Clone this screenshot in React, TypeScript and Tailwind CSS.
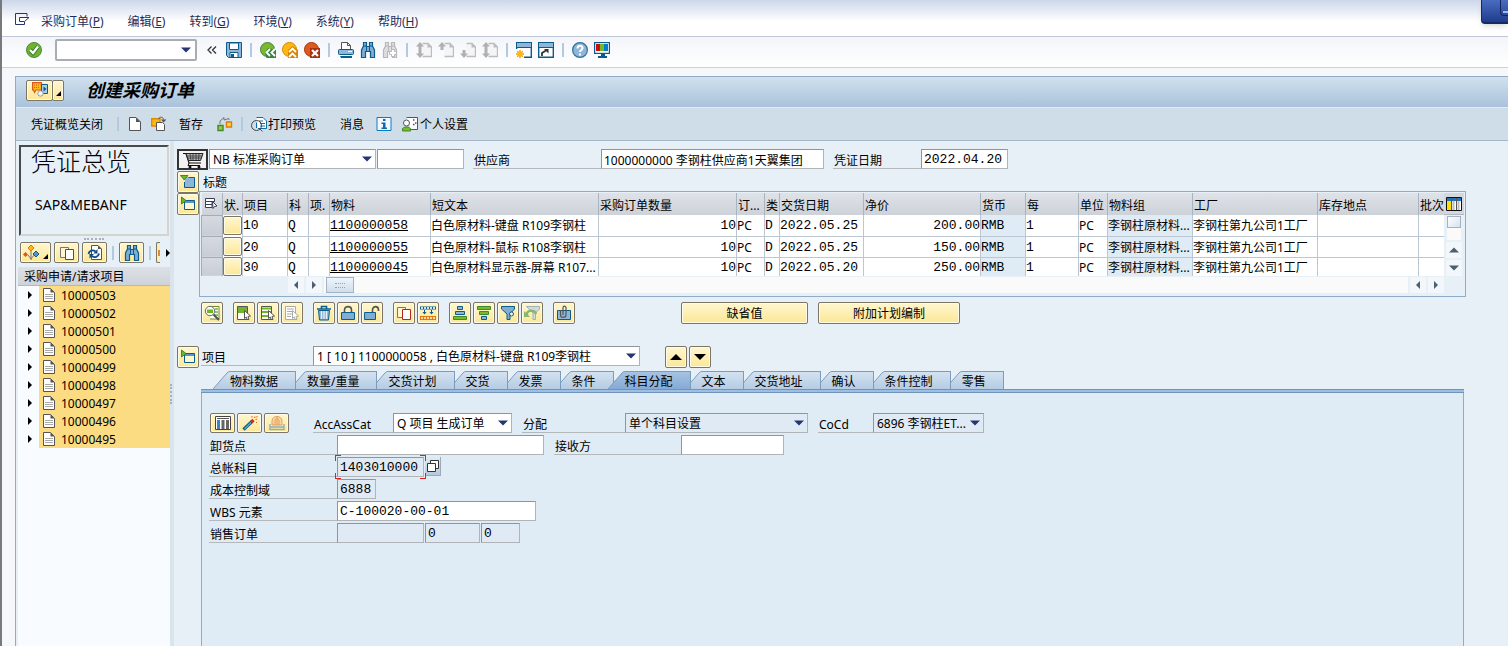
import { useState } from "react";
import type { ReactNode } from "react";

type IconProps = { children: ReactNode; size?: number };

const Icon = ({ children, size = 16 }: IconProps) => (
  <svg
    width={size}
    height={size}
    viewBox="0 0 16 16"
    fill="none"
    className="shrink-0"
    aria-hidden="true"
  >
    {children}
  </svg>
);

const MenuExitIcon = () => (
  <Icon>
    <path d="M13 4.5V1.5H1.5V12.5H10.5V10" stroke="#26366b" />
    <path d="M5.5 5.5H15L10.5 9.5H5.5Z" fill="#fff" stroke="#26366b" />
  </Icon>
);

const CheckIcon = () => (
  <Icon>
    <circle cx="8" cy="8" r="7.5" fill="#6fb52c" stroke="#4c8a3f" />
    <path d="M4 8L7 11L12 4.5" stroke="#2f6b2b" strokeWidth="4" />
    <path d="M4 8L7 11L12 4.5" stroke="#fff" strokeWidth="2.4" />
  </Icon>
);

const SaveIcon = () => (
  <Icon>
    <path d="M.5.5H15.5V15.5H2.5L.5 13.5Z" fill="#8fb5d8" stroke="#0b5c8c" />
    <path d="M3.5 1H12.5V7.5H3.5Z" fill="#fff" stroke="#0b5c8c" />
    <path d="M4 10.5H12V15.5H4Z" fill="#fff" stroke="#0b5c8c" />
    <path d="M5 12H8V15H5Z" fill="#0b5c8c" />
  </Icon>
);

const BackIcon = () => (
  <Icon>
    <circle cx="7.5" cy="7.5" r="7" fill="#7ab82e" stroke="#3f8048" />
    <path d="M16 8V16H6.5L5 11L8 6Z" fill="#3f8048" />
    <path d="M10 7L6.5 10.5L10 14M15 7L11.5 10.5L15 14" stroke="#fff" strokeWidth="1.8" />
  </Icon>
);

const UpIcon = () => (
  <Icon>
    <circle cx="7.5" cy="7.5" r="7" fill="#fdb913" stroke="#d98500" />
    <path d="M6 16V8L10.5 4L16 8V16Z" fill="#d98500" />
    <path d="M7 10L10.5 6.5L14 10M7 15L10.5 11.5L14 15" stroke="#fff" strokeWidth="1.8" />
  </Icon>
);

const CancelIcon = () => (
  <Icon>
    <circle cx="7.5" cy="7.5" r="7" fill="#dc5b1a" stroke="#a83212" />
    <path d="M6 6H16V16H6Z" fill="#a83212" />
    <path d="M8 8L14 14M14 8L8 14" stroke="#fff" strokeWidth="2.2" />
  </Icon>
);

const PrintIcon = () => (
  <Icon>
    <path d="M3.5 7V.5H9.5L12.5 3.5V7" fill="#fff" stroke="#555" />
    <path d="M9.5.5V3.5H12.5" stroke="#555" />
    <rect x=".5" y="7.5" width="15" height="5" rx="1" fill="#8fb5d8" stroke="#0b5c8c" />
    <path d="M10 9.5H14" stroke="#fff" />
    <path d="M2 14H14V16H3Z" fill="#0b5c8c" />
  </Icon>
);

const BinocularsIcon = ({ muted = false }: { muted?: boolean }) => {
  const line = muted ? "#b8b8b8" : "#0b5c8c";
  const fill = muted ? "#dedede" : "#7fadd4";
  return (
    <Icon>
      <path
        d="M3.5.5H6.5V4.5H9.5V.5H12.5V4L14.5 8V15.5H10.5V9.500H5.5V15.5H1.500V8L3.5 4Z"
        fill={fill}
        stroke={line}
        strokeWidth="1.2"
      />
      <path d="M6.5 4.5V9M9.5 4.5V9M3.5 4H6M10 4H12.5" stroke={line} />
      {muted && (
        <path d="M9.5 7.5H12.5V9.500H14.5V12.5H12.5V14.5H9.500V12.5H7.5V9.5H9.5Z" fill="#fff" stroke="#b8b8b8" />
      )}
    </Icon>
  );
};

// first / previous / next / last page
const PageIcon = ({ up, down }: { up?: boolean; down?: boolean }) => (
  <Icon>
    <path d="M6.500 1.5H12L15.5 5V14.5H6.5" fill="#f5f5f5" stroke="#bdbdbd" strokeWidth="1.4" />
    <path d="M11.5 1V5.5H16Z" fill="#bdbdbd" />
    {up && <path d="M4 0L8 4.5H5.5V8H2.5V4.5H0Z" fill="#b0b0b0" />}
    {down && <path d="M4 16L0 11.5H2.5V8H5.5V11.5H8Z" fill="#b0b0b0" />}
  </Icon>
);

const NewSessionIcon = () => (
  <Icon>
    <path d="M.7.7H15.3V15.3H.7Z" fill="#fff" stroke="#0b5c8c" strokeWidth="1.4" />
    <path d="M1 1H15V5H1Z" fill="#8fb5d8" />
    <path d="M0 5.5H16" stroke="#0b5c8c" />
    <path d="M0 7H8V16H0Z" fill="#fff" />
    <path d="M4 8V16M0 12H8M1.2 9.2L6.8 14.8M6.8 9.2L1.2 14.8" stroke="#f5a000" strokeWidth="1.5" />
    <circle cx="4" cy="12" r="2.2" fill="#fdb913" />
  </Icon>
);

const ShortcutIcon = () => (
  <Icon>
    <path d="M.7.7H15.3V15.3H.7Z" fill="#fff" stroke="#0b5c8c" strokeWidth="1.4" />
    <path d="M1 1H15V5H1Z" fill="#8fb5d8" />
    <path d="M0 5.5H16" stroke="#0b5c8c" />
    <path d="M4 14V11L8 8.5" stroke="#333" strokeWidth="1.8" />
    <path d="M6 7H10.5V11.5Z" fill="#333" />
  </Icon>
);

const HelpIcon = () => (
  <Icon>
    <circle cx="8" cy="8" r="7.4" fill="#8fb5d8" stroke="#33719c" strokeWidth="1.2" />
    <path d="M5.5 6.5C5.5 3 10.5 3 10.5 6C10.5 8 8 8 8 10" stroke="#fff" strokeWidth="2" />
    <path d="M7 11.5H9V13.5H7Z" fill="#fff" />
  </Icon>
);

const MonitorIcon = () => (
  <Icon>
    <rect x=".6" y=".6" width="14.8" height="10.8" fill="#fff" stroke="#0b5c8c" strokeWidth="1.2" />
    <path d="M2 2H6V9H2Z" fill="#cc1010" />
    <path d="M6 2H10V9H6Z" fill="#76b82a" />
    <path d="M10 2H14V9H10Z" fill="#0a7cc4" />
    <path d="M5 12H11V14H13V16H4V14H7V12Z" fill="#0b5c8c" />
  </Icon>
);

const NewDocIcon = () => (
  <Icon>
    <path d="M2.5 1.5H9L13.5 6V14.5H2.5Z" fill="#fff" stroke="#555" />
    <path d="M9 1.5V6H13.5Z" fill="#555" />
  </Icon>
);

const CopyFromIcon = () => (
  <Icon>
    <path d="M.7 2.7H9V10H.7Z" fill="#fdb913" stroke="#e08a00" strokeWidth="1.4" />
    <path d="M5.5 6.5H11.5L13.5 8.500V14.5H5.5Z" fill="#fff" stroke="#555" />
    <path d="M7.500 3C8.500 .5 12 .5 12.5 3.5" stroke="#555" />
    <path d="M10 3.500H15.500L12.500 6.500Z" fill="#555" />
  </Icon>
);

const HoldIcon = () => (
  <Icon>
    <path d="M3 8V5L7 1.500V4L12 2.500V4" stroke="#777" />
    <path d="M1 9.500H6V14.500H1Z" fill="#9ccc3c" stroke="#3f8a2e" strokeWidth="1.4" />
    <path d="M9.5 6H14.5V11H9.5Z" fill="#fdd835" stroke="#e07a10" strokeWidth="1.4" />
  </Icon>
);

const PreviewIcon = () => (
  <Icon>
    <path d="M5.5 1.5H12L15.5 5V12.5H7" fill="#fff" stroke="#0b6ca8" />
    <path d="M8 5H12M9 7.5H14M9 10H14" stroke="#0b6ca8" />
    <circle cx="5.5" cy="9.5" r="5" stroke="#444" />
    <path d="M5.5 6.500V12M9 13L11.5 15.500" stroke="#0b6ca8" />
  </Icon>
);

const InfoIcon = () => (
  <Icon>
    <path d="M1 1.5H15V14.5H1Z" fill="#f2f8fd" stroke="#0b7cc4" />
    <path d="M7 3H9.5V5H7ZM5.5 6.5H9.5V11.5H11V13H5.5V11.5H7V8H5.5Z" fill="#0b6ca8" />
  </Icon>
);

const PersonIcon = () => (
  <Icon>
    <path d="M4.5 1.5H15.5V13.5H9" fill="#fff" stroke="#555" />
    <path d="M11 4H12.5M13 7H14.5M11 8.5H12.5" stroke="#555" strokeWidth="1.5" />
    <circle cx="4.5" cy="7" r="3" fill="#fff" stroke="#555" />
    <path d="M.5 15V12.5L3 11H6L8.5 12.5V15Z" fill="#7ab82e" stroke="#3f8a2e" />
  </Icon>
);

const ServicesIcon = () => (
  <Icon>
    <path d="M.6 .6H9.5V8H4L2.5 10.5L1.5 8H.6Z" fill="#fdb913" stroke="#d9581a" strokeWidth="1.2" />
    <path d="M2 3H8.500M2 5.5H8" stroke="#d9581a" strokeDasharray="1 1" />
    <path d="M9.5 2.5H15.5V11.5H9.5Z" fill="#a9cbe6" stroke="#0b5c8c" />
    <path d="M11.5 4.5L14.5 7L11.5 9.5Z" fill="#0b5c8c" />
    <circle cx="8.500" cy="11.5" r="2.7" fill="#f4f4f4" stroke="#999" />
  </Icon>
);

const CartIcon = () => (
  <svg width="24" height="18" viewBox="0 0 24 18" fill="none" aria-hidden="true">
    <path d="M2 2.500H5L8 12H20" stroke="#111" strokeWidth="1.2" />
    <path d="M5 2.500H22L19.5 9.5H7.5Z" fill="#b8b8b8" stroke="#222" />
    <path d="M6 5H21.5M7 7H20.5M9 3L10 9.5M12 3V9.5M15 3V9.5M18 3L17.5 9.5" stroke="#333" strokeWidth=".8" />
    <path d="M8 12L7 14.5H19" stroke="#111" />
    <circle cx="9" cy="16" r="1.5" fill="#111" />
    <circle cx="18" cy="16" r="1.5" fill="#111" />
  </svg>
);

const ExpandIcon = ({ open = false }: { open?: boolean }) => (
  <Icon>
    {open ? (
      <>
        <path d="M8 3.500H14.5V13.5H4.5V8" fill="#8fb5d8" stroke="#0b5c8c" />
        <path d="M5 2.500V9L10 4" fill="#8fb5d8" />
        <path d="M.5 1.5H8L4.2 6Z" fill="#6fb52c" stroke="#3f8a2e" />
      </>
    ) : (
      <>
        <path d="M4.500 4.500H14.5V13.5H4.5Z" fill="#fff6cf" stroke="#0b5c8c" />
        <path d="M5 5H14V7H5Z" fill="#5d93c0" />
        <path d="M1.5 1V8L6 4.5Z" fill="#6fb52c" stroke="#3f8a2e" />
      </>
    )}
  </Icon>
);

const SelectAllIcon = () => (
  <Icon>
    <path d="M2.5 2.5H11.5V5.5H2.5ZM2.5 5.5H9V8.5H2.5ZM2.5 8.5H9V11.5H2.5Z" fill="#fff" stroke="#3b3f55" />
    <path d="M9.5 5.5L14 10L11.5 10.5L10 12.5Z" fill="#fff" stroke="#3b3f55" />
  </Icon>
);

const ColumnsIcon = () => (
  <Icon>
    <path d="M.5 1.5H15.5V14.5H.5Z" fill="#fff" stroke="#111" />
    <path d="M1 2H15V5H1Z" fill="#2a6fb0" />
    <path d="M1 5H5V14H1Z" fill="#ffe100" />
    <path d="M6.5 5H8.5V14H6.5ZM11.5 5H13.5V14H11.5Z" fill="#bbb" />
    <path d="M5.5 2V14M10.500 2V14" stroke="#555" />
  </Icon>
);

const DetailsIcon = () => (
  <Icon>
    <path d="M6 1.5H15V14H6" fill="#fff" stroke="#6a8a3a" />
    <path d="M11 4H14M11 7H14M11 10H14" stroke="#6fb52c" strokeWidth="1.4" />
    <circle cx="6" cy="6" r="4.7" fill="#f8fff0" stroke="#666" />
    <path d="M3 4.5H9V8H3Z" fill="#6fb52c" />
    <path d="M9.5 9.5L15 15" stroke="#555" strokeWidth="2.2" />
  </Icon>
);

const SelectBlockIcon = ({ kind }: { kind: "all" | "rows" | "none" }) => {
  const tone = kind === "none" ? "#aaa" : "#6fb52c";
  const frame = kind === "none" ? "#aaa" : "#555";
  return (
    <Icon>
      <path d="M1.5 1.5H11.5V14.5H1.5Z" fill="#fff" stroke={frame} />
      {kind === "all" && <path d="M2 2H11V8H2Z" fill={tone} />}
      {kind === "rows" && <path d="M2 3.5H11M2 7H11M2 11H9" stroke={tone} strokeWidth="2.2" />}
      {kind === "none" && <path d="M3 4H10M3 6.5H9M3 9H8M3 11.5H7" stroke={tone} />}
      <path d="M8.5 5.5L14.5 11L12 11.5L13 14.5L11 14.5L10.5 12L8.5 13.5Z" fill="#fff" stroke={frame} />
    </Icon>
  );
};

const TrashIcon = () => (
  <Icon>
    <path d="M1 4H15M5.5 3.5V1.5H10.5V3.5" stroke="#0b5c8c" strokeWidth="1.6" />
    <path d="M2.5 5.5H13.5L12.5 15H3.5Z" fill="#8fb5d8" stroke="#0b5c8c" />
    <path d="M5.5 6V14M8 6V14M10.5 6V14" stroke="#e8f2fa" strokeWidth="1.2" />
  </Icon>
);

const LockIcon = ({ open = false }: { open?: boolean }) => (
  <Icon>
    {open ? (
      <path d="M8.5 7V5C8.5 .5 14.5 .5 14.5 5V6" stroke="#555" strokeWidth="1.6" />
    ) : (
      <path d="M4.5 7V5C4.5 .5 11.5 .5 11.5 5V7" stroke="#555" strokeWidth="1.6" />
    )}
    <path d={open ? "M.6 7.5H11.5V14.5H.6Z" : "M1.5 7.5H14.5V14.5H1.5Z"} fill="#7fadd4" stroke="#0b5c8c" />
  </Icon>
);

const CopyIcon = () => (
  <Icon>
    <path d="M1.5 2.5H9.5V12.5H1.5Z" fill="#fff6cf" stroke="#777" />
    <path d="M6.5 4.5H14.5V14.5H6.5Z" fill="#fff" stroke="#b3261e" />
  </Icon>
);

const SplitRowsIcon = () => (
  <Icon>
    <path d="M0 1.5H16V4.5H0Z" fill="#0b5c8c" />
    <path d="M1 3H15" stroke="#cfe2f2" strokeWidth="2" strokeDasharray="2 1" />
    <path d="M4.5 5V9M11.5 5V9" stroke="#0b5c8c" />
    <path d="M2.5 7H6.5L4.5 9.5ZM9.5 7H13.5L11.5 9.5Z" fill="#0b5c8c" />
    <path d="M0 11H16V15H0Z" fill="#e07a10" />
    <path d="M1 13H15" stroke="#fde0a0" strokeWidth="2" strokeDasharray="2 1" />
  </Icon>
);

const SortIcon = ({ desc = false }: { desc?: boolean }) => (
  <Icon>
    {desc ? (
      <>
        <path d="M1.5 1.5H14.5V4.5H1.5Z" fill="#7ab82e" stroke="#3f8a2e" />
        <path d="M3.5 6.5H12.5V9.5H3.5Z" fill="#7ab82e" stroke="#3f8a2e" />
        <path d="M5.5 11.5H10.5V14.5H5.5Z" fill="#8fb5d8" stroke="#0b5c8c" />
      </>
    ) : (
      <>
        <path d="M5.5 1.5H10.5V4.5H5.5Z" fill="#8fb5d8" stroke="#0b5c8c" />
        <path d="M3.5 6.5H12.5V9.5H3.5Z" fill="#8fb5d8" stroke="#0b5c8c" />
        <path d="M1.5 11.5H14.5V14.5H1.5Z" fill="#7ab82e" stroke="#3f8a2e" />
      </>
    )}
  </Icon>
);

const FilterIcon = () => (
  <Icon>
    <path d="M1.5 1.5H14.5V4L10 9V14.5H7V9L1.5 4Z" fill="#7fadd4" stroke="#0b5c8c" />
    <circle cx="11.5" cy="9" r="2" fill="#fff6cf" stroke="#0b5c8c" />
  </Icon>
);

const FilterUndoIcon = () => (
  <Icon>
    <path d="M2.5 1.5H15.5V4L11.5 8V14.5H9V8Z" fill="#cfdbe0" stroke="#9fb2b8" />
    <path d="M3 12V8C5 4.5 11 5 12 9" stroke="#8ab56a" strokeWidth="2.4" />
    <path d="M0 6V12H6Z" fill="#8ab56a" />
  </Icon>
);

const AttachIcon = () => (
  <Icon>
    <path d="M1.5 5.5H14.5V14.5H1.5Z" fill="#8fb5d8" stroke="#0b5c8c" />
    <path d="M4.500 5V10C4.500 13 10 13 10 10V3C10 .5 7 .5 7 3V10" stroke="#555" strokeWidth="1.2" />
  </Icon>
);

const GridIcon = () => (
  <Icon>
    <path d="M.5 1.5H15.5V14.5H.5Z" fill="#fff" stroke="#444" />
    <path d="M2 3.500H14" stroke="#555" />
    <path d="M2 5H5V14H2Z" fill="#3c86bd" />
    <path d="M6.5 5H9.5V14H6.5ZM11 5H14V14H11Z" fill="#666" />
  </Icon>
);

const WandIcon = () => (
  <Icon>
    <path d="M1.500 14.5L10 6.5" stroke="#0b5c8c" strokeWidth="3.2" />
    <path d="M2.5 14L9 7.5" stroke="#6aa3d1" strokeWidth="1.2" />
    <path d="M9.5 7L11.5 5" stroke="#cc2a1a" strokeWidth="3.2" />
    <path d="M10 1V2.5M13 1.5L12.5 3M15 4L13.5 4.5M15 7.5H14M15.5 1L14 2.5" stroke="#e05a10" />
  </Icon>
);

const SessionsIcon = () => (
  <Icon>
    <path d="M3 10V6C3 0 13 0 13 6V10Z" fill="#fbd6a0" stroke="#e0a060" />
    <path d="M6 10V6C6 3 10 3 10 6V10M8 2V10" stroke="#e0a060" />
    <path d="M1 9V14.5H15V9M1 12H15" stroke="#8fb0b8" strokeWidth="1.4" />
  </Icon>
);

const HierarchyIcon = () => (
  <Icon>
    <path d="M8 5V15M5 10L8 14L12 9" stroke="#777" />
    <path d="M8 0L11 3L8 6L5 3Z" fill="#fdb913" stroke="#e07a10" />
    <path d="M2.5 7L5 9.5L2.5 12L0 9.5Z" fill="#d9581a" />
    <path d="M13 6L16 9L13 12L10 9Z" fill="#5d93c0" stroke="#0b5c8c" />
  </Icon>
);

const RefreshIcon = () => (
  <Icon>
    <path d="M4.5.5H11L14.5 4V14.5H4.5Z" fill="#fff" stroke="#555" />
    <path d="M11 .5V4H14.5Z" fill="#555" />
    <path d="M1.500 9C2 5.500 6 4.500 8.500 6.500M12 8.500C11.500 12 7.500 13 5 11" stroke="#0b4c8c" strokeWidth="1.8" />
    <path d="M10.500 4V8.500H6.500ZM2.500 13.500V9H7Z" fill="#0b4c8c" />
  </Icon>
);

const SheetIcon = () => (
  <Icon>
    <path d="M2.500 1.500H9.5L13.5 5.5V14.5H2.5Z" fill="#fff" stroke="#555" />
    <path d="M9.5 1.500V5.5H13.5Z" fill="#555" />
    <path d="M4 7.5H12M4 9.5H12M4 11.5H12" stroke="#aaa" />
  </Icon>
);

const Triangle = ({ dir, big = false }: { dir: "up" | "down" | "left" | "right"; big?: boolean }) => {
  const paths = {
    up: "M0 7.500L5 2.500L10 7.500Z",
    down: "M0 2.500L5 7.500L10 2.500Z",
    left: "M7 1V9L3 5Z",
    right: "M3 1V9L7 5Z",
  };
  return (
    <svg
      width={big ? 12 : 10}
      height={big ? 12 : 10}
      viewBox="0 0 10 10"
      fill="currentColor"
      aria-hidden="true"
    >
      <path d={paths[dir]} />
    </svg>
  );
};

const Separator = () => (
  <span className="flex w-1.5 shrink-0 justify-center">
    <span className="h-3.5 w-0.5 bg-[#b3c9de]" />
  </span>
);

const IconButton = ({ label, children }: { label: string; children: ReactNode }) => (
  <button type="button" aria-label={label} className="flex shrink-0 items-center justify-center">
    {children}
  </button>
);

const yellow =
  "flex shrink-0 items-center justify-center rounded-xs border border-[#7b7668] bg-linear-to-b from-[#fff6d0] to-[#fde794] shadow-[inset_0_0_0_1px_#fffbe6]";

const YellowButton = ({
  label,
  size = "h-[22px] w-[22px]",
  children,
}: {
  label: string;
  size?: string;
  children?: ReactNode;
}) => (
  <button type="button" aria-label={label} className={`${yellow} ${size}`}>
    {children}
  </button>
);

const mono = "font-['Liberation_Mono','Noto_Sans_CJK_SC',monospace] text-[13px]";
const fieldBase =
  "h-5 border border-[#b0b4b8] border-t-[#8f959b] border-l-[#8f959b] pt-px outline-none";

const Field = ({
  id,
  label,
  value = "",
  width,
  readOnly = false,
  useMono = false,
}: {
  id: string;
  label?: string;
  value?: string;
  width: string;
  readOnly?: boolean;
  useMono?: boolean;
}) => (
  <input
    id={id}
    aria-label={label}
    defaultValue={value}
    readOnly={readOnly}
    className={`${fieldBase} shrink-0 px-0.5 ${width} ${readOnly ? "bg-[#dfeaf4]" : "bg-white"} ${useMono ? mono : ""}`}
  />
);

const Select = ({
  id,
  label,
  value,
  width,
  muted = false,
}: {
  id: string;
  label?: string;
  value: string;
  width: string;
  muted?: boolean;
}) => (
  <span className={`relative shrink-0 ${width}`}>
    <select
      id={id}
      aria-label={label}
      className={`${fieldBase} block w-full appearance-none overflow-hidden pr-3.5 pl-[3px] text-ellipsis whitespace-nowrap ${muted ? "bg-[#dfeaf4]" : "bg-white"}`}
    >
      <option>{value}</option>
    </select>
    <span className="pointer-events-none absolute top-0 right-1 flex h-[19px] items-center text-[#23366f]">
      <Triangle dir="down" />
    </span>
  </span>
);

const Label = ({ htmlFor, width, children }: { htmlFor: string; width: string; children: ReactNode }) => (
  <label
    htmlFor={htmlFor}
    className={`flex h-5 shrink-0 items-end border-b border-[#b5b8bb] pl-px leading-[14px] whitespace-nowrap ${width}`}
  >
    {children}
  </label>
);

const menus = [
  ["采购订单", "P"],
  ["编辑", "E"],
  ["转到", "G"],
  ["环境", "V"],
  ["系统", "Y"],
  ["帮助", "H"],
];

const requests = [503, 502, 501, 500, 499, 498, 497, 496, 495];

const columns = [
  { title: "状.", width: "w-5" },
  { title: "项目", width: "w-[45px]" },
  { title: "科", width: "w-[21px]" },
  { title: "项.", width: "w-[21px]" },
  { title: "物料", width: "w-[101px]" },
  { title: "短文本", width: "w-[168px]" },
  { title: "采购订单数量", width: "w-[138px]" },
  { title: "订...", width: "w-[28px]" },
  { title: "类", width: "w-[15px]" },
  { title: "交货日期", width: "w-[84px]" },
  { title: "净价", width: "w-[117px]" },
  { title: "货币", width: "w-[45px]" },
  { title: "每", width: "w-[53px]" },
  { title: "单位", width: "w-[29px]" },
  { title: "物料组", width: "w-[85px]" },
  { title: "工厂", width: "w-[125px]" },
  { title: "库存地点", width: "w-[101px]" },
  { title: "批次", width: "" },
];

const items = [
  { no: "10", material: "1100000058", text: "白色原材料-键盘 R109李钢柱", date: "2022.05.25", price: "200.00" },
  { no: "20", material: "1100000055", text: "白色原材料-鼠标 R108李钢柱", date: "2022.05.25", price: "150.00" },
  { no: "30", material: "1100000045", text: "白色原材料显示器-屏幕 R107...", date: "2022.05.20", price: "250.00" },
];

const tabs = [
  "物料数据",
  "数量/重量",
  "交货计划",
  "交货",
  "发票",
  "条件",
  "科目分配",
  "文本",
  "交货地址",
  "确认",
  "条件控制",
  "零售",
];

const MenuBar = () => (
  <nav className="flex h-[37px] items-center border-b border-[#c0c8d8] bg-linear-to-b from-[#cdd7ea] to-white to-60% pt-1 pl-3 text-[#1f2d5c]">
    <IconButton label="菜单">
      <MenuExitIcon />
    </IconButton>
    <div className="ml-[11px] flex gap-6 pt-1">
      {menus.map(([name, key]) => (
        <button type="button" key={key}>
          {name}(<u>{key}</u>)
        </button>
      ))}
    </div>
  </nav>
);

const StandardToolbar = () => (
  <div className="flex h-[31px] items-center gap-1.5 border-b border-[#cbd0da] bg-linear-to-b from-[#f3f5fa] to-white pb-1 pl-6">
    <IconButton label="回车">
      <CheckIcon />
    </IconButton>
    <span className="relative ml-[7px] w-[142px]">
      <input
        aria-label="命令"
        className="block h-[22px] w-full rounded-xs border-2 border-[#a9acb0] bg-white px-1 outline-none"
      />
      <span className="pointer-events-none absolute inset-y-0 right-1.5 flex items-center text-[#23366f]">
        <Triangle dir="down" />
      </span>
    </span>
    <button type="button" aria-label="收起" className="mr-[3px] ml-1 w-2.5 text-[#333]">
      <svg width="10" height="8" viewBox="0 0 10 8" fill="none" stroke="currentColor" strokeWidth="1.3" aria-hidden="true">
        <path d="M4.500 .5L1 4L4.500 7.500M9 .5L5.500 4L9 7.500" />
      </svg>
    </button>
    <IconButton label="保存"><SaveIcon /></IconButton>
    <Separator />
    <IconButton label="返回"><BackIcon /></IconButton>
    <IconButton label="退出"><UpIcon /></IconButton>
    <IconButton label="取消"><CancelIcon /></IconButton>
    <Separator />
    <IconButton label="打印"><PrintIcon /></IconButton>
    <IconButton label="查找"><BinocularsIcon /></IconButton>
    <IconButton label="查找下一个"><BinocularsIcon muted /></IconButton>
    <Separator />
    <IconButton label="第一页"><PageIcon up down /></IconButton>
    <IconButton label="上一页"><PageIcon up /></IconButton>
    <IconButton label="下一页"><PageIcon down /></IconButton>
    <IconButton label="最后一页"><PageIcon up down /></IconButton>
    <Separator />
    <IconButton label="新建会话"><NewSessionIcon /></IconButton>
    <IconButton label="快捷方式"><ShortcutIcon /></IconButton>
    <Separator />
    <IconButton label="帮助"><HelpIcon /></IconButton>
    <IconButton label="布局"><MonitorIcon /></IconButton>
  </div>
);

const TitleBar = () => (
  <header className="flex h-[30px] items-center bg-linear-to-b from-[#d0e1ee] to-[#aac2db] pb-1 pl-2.5">
    <div className="flex">
      <button type="button" aria-label="服务" className={`${yellow} h-[21px] w-[27px]`}>
        <ServicesIcon />
      </button>
      <button type="button" aria-label="更多服务" className={`${yellow} -ml-px h-[21px] w-3 items-end pb-1`}>
        <svg width="5" height="5" aria-hidden="true"><path d="M5 0V5H0Z" /></svg>
      </button>
    </div>
    <h1 className="ml-[22px] text-lg leading-6 font-bold italic">创建采购订单</h1>
  </header>
);

const AppToolbar = () => (
  <div className="flex h-[34px] items-center border-t border-[#e3ecf4] border-b border-b-[#a5b6cc] bg-[#cfdde8] pl-[15px]">
    <button type="button" className="pt-0.5">凭证概览关闭</button>
    <span className="ml-3"><Separator /></span>
    <span className="ml-1.5 flex items-center gap-2">
      <IconButton label="新建"><NewDocIcon /></IconButton>
      <IconButton label="其他采购订单"><CopyFromIcon /></IconButton>
    </span>
    <button type="button" className="ml-3 pt-0.5">暂存</button>
    <span className="ml-3.5 flex"><IconButton label="检查"><HoldIcon /></IconButton></span>
    <span className="ml-1.5"><Separator /></span>
    <button type="button" className="ml-1.5 flex items-center gap-px">
      <PreviewIcon />
      <span className="pt-0.5">打印预览</span>
    </button>
    <button type="button" className="ml-6 pt-0.5">消息</button>
    <span className="ml-3 flex"><IconButton label="信息"><InfoIcon /></IconButton></span>
    <button type="button" className="ml-2.5 flex items-center gap-0.5">
      <PersonIcon />
      <span className="pt-0.5">个人设置</span>
    </button>
  </div>
);

const Overview = () => (
  <aside className="flex w-[154px] shrink-0 flex-col pt-1 pl-0.5">
    <div className="ml-px h-[91px] w-[150px] border-2 border-[#d5d3cd] border-t-[#4a4a4a] border-l-[#4a4a4a] pl-2.5">
      <h2 className="text-[25px] leading-7 font-light">凭证总览</h2>
      <p className="mt-5 pl-1 text-sm leading-5">SAP&amp;MEBANF</p>
    </div>
    <div className="flex h-1.5 items-center justify-center">
      <span className="w-5 border-t-2 border-dotted border-[#a9b2ba]" />
    </div>
    <div className="flex h-[21px] items-center gap-[3px] pl-0.5">
      <YellowButton label="选择变式" size="h-[21px] w-[31px]">
        <HierarchyIcon />
        <svg width="5" height="5" className="mt-2 ml-1" aria-hidden="true"><path d="M5 0V5H0Z" /></svg>
      </YellowButton>
      <YellowButton label="复制" size="h-[21px] w-[25px]"><CopyIcon /></YellowButton>
      <YellowButton label="刷新" size="h-[21px] w-[25px]"><RefreshIcon /></YellowButton>
      <Separator />
      <YellowButton label="查找" size="h-[21px] w-[25px]"><BinocularsIcon /></YellowButton>
      <Separator />
      <span className="flex h-[21px] w-1 shrink-0 items-center rounded-l-xs border border-r-0 border-[#7b7668] bg-[#fdeeb0] pl-px">
        <span className="h-1.5 w-full bg-[#e08a30]" />
      </span>
      <button type="button" aria-label="更多"><Triangle dir="right" /></button>
    </div>
    <div className="mt-1 flex flex-1 flex-col bg-[#f8fbff]">
      <h3 className="h-[19px] border-b border-[#b3b8be] bg-linear-to-b from-[#dde1e6] to-[#ced3d9] pl-1.5 leading-5">
        采购申请/请求项目
      </h3>
      <ul>
        {requests.map((n) => (
          <li key={n} className="flex h-[18px]">
            <button type="button" aria-label="展开" className="flex w-[21px] items-center justify-center pl-0.5">
              <Triangle dir="right" />
            </button>
            <span className="flex flex-1 items-center gap-1 bg-[#fcdc82] pl-0.5">
              <SheetIcon />
              <span className="pt-0.5">10000{n}</span>
            </span>
          </li>
        ))}
      </ul>
    </div>
  </aside>
);

const cell = "overflow-hidden border-r border-b border-[#bcc7d4] px-0 pt-0.5 pb-0 whitespace-nowrap";

const ItemTable = () => (
  <table className="w-full table-fixed border-collapse">
    <colgroup>
      <col className="w-[21px]" />
      {columns.map((c, i) => (
        <col key={i} className={c.width} />
      ))}
    </colgroup>
    <thead>
      <tr className="h-[22px] bg-linear-to-b from-[#dfe3e8] to-[#cdd2d9] text-left">
        <th className="border-r border-[#a9b4c2] p-0">
          <button type="button" aria-label="全选" className="block pl-px">
            <SelectAllIcon />
          </button>
        </th>
        {columns.map((c, i) => (
          <th
            key={i}
            className="overflow-hidden border-r border-[#a9b4c2] pt-1 pr-0 pb-0 pl-px font-normal whitespace-nowrap last:border-r-0"
          >
            {c.title}
          </th>
        ))}
      </tr>
    </thead>
    <tbody>
      {items.map((row) => (
        <tr key={row.no} className="h-[21px] bg-white last:h-[18px]">
          <td className="border border-[#a4acb6] bg-linear-to-b from-[#d6dae0] to-[#c8ccd4] p-0" />
          <td className="border-r border-[#bcc7d4] p-0">
            <button type="button" aria-label={`状态 ${row.no}`} className={`${yellow} h-[19px] w-[19px]`} />
          </td>
          <td className={`${cell} ${mono}`}>{row.no}</td>
          <td className={`${cell} ${mono}`}>Q</td>
          <td className={cell} />
          <td className={`${cell} ${mono}`}>
            <a href="#material" className="underline">{row.material}</a>
          </td>
          <td className={cell}>{row.text}</td>
          <td className={`${cell} ${mono} text-right`}>10</td>
          <td className={cell}>PC</td>
          <td className={`${cell} ${mono}`}>D</td>
          <td className={`${cell} ${mono}`}>{row.date}</td>
          <td className={`${cell} ${mono} text-right`}>{row.price}</td>
          <td className={`${cell} ${mono} bg-[#dfebf5]`}>RMB</td>
          <td className={`${cell} ${mono}`}>1</td>
          <td className={cell}>PC</td>
          <td className={`${cell} bg-[#dfebf5]`}>李钢柱原材料...</td>
          <td className={cell}>李钢柱第九公司1工厂</td>
          <td className={cell} />
          <td className="border-b border-[#bcc7d4]" />
        </tr>
      ))}
    </tbody>
  </table>
);

const ScrollButton = ({ dir, label }: { dir: "up" | "down" | "left" | "right"; label: string }) => (
  <button
    type="button"
    aria-label={label}
    className="flex size-4 shrink-0 items-center justify-center bg-[#f3f7fb] text-[#4a5f70]"
  >
    <Triangle dir={dir} />
  </button>
);

const TablePanel = () => (
  <div className="mr-[42px] h-[106px] border border-[#8fadc8] p-px">
    <div className="flex h-[83px] overflow-hidden">
      <div className="min-w-0 flex-1">
        <ItemTable />
      </div>
      <div className="flex w-5 flex-col items-center">
        <button
          type="button"
          aria-label="表设置"
          className="flex h-[22px] w-full items-center justify-center border-b border-[#b3b8be] bg-[#d3d8de]"
        >
          <ColumnsIcon />
        </button>
        <span className="mt-px h-3 w-3.5 border border-[#a3b3c4] bg-linear-to-br from-white to-[#d5e2ee]" />
        <span className="mb-0.5 w-3.5 flex-1 bg-[#fafafa]" />
        <ScrollButton dir="up" label="上" />
        <span className="h-0.5" />
        <ScrollButton dir="down" label="下" />
      </div>
    </div>
    <div className="mt-px flex h-4 gap-0.5 pr-5 pl-[87px]">
      <ScrollButton dir="left" label="左" />
      <ScrollButton dir="right" label="右" />
      <div className="flex flex-1 bg-[#fafafa]">
        <span className="ml-0.5 flex h-4 w-7 items-center justify-center border border-[#a3b3c4] bg-linear-to-b from-[#eef4fa] to-[#cfdeec]">
          <span className="h-[5px] w-2.5 border-y border-dotted border-[#8fa6bb]" />
        </span>
      </div>
      <ScrollButton dir="left" label="向左" />
      <ScrollButton dir="right" label="向右" />
    </div>
  </div>
);

const ItemToolbar = () => (
  <div className="mt-[5px] flex gap-2.5 pl-6">
    <YellowButton label="明细"><DetailsIcon /></YellowButton>
    <div className="flex gap-0.5">
      <YellowButton label="全选"><SelectBlockIcon kind="all" /></YellowButton>
      <YellowButton label="选择块"><SelectBlockIcon kind="rows" /></YellowButton>
      <YellowButton label="取消全选"><SelectBlockIcon kind="none" /></YellowButton>
    </div>
    <div className="flex gap-0.5">
      <YellowButton label="删除"><TrashIcon /></YellowButton>
      <YellowButton label="冻结"><LockIcon /></YellowButton>
      <YellowButton label="解冻"><LockIcon open /></YellowButton>
    </div>
    <div className="flex gap-0.5">
      <YellowButton label="复制项目"><CopyIcon /></YellowButton>
      <YellowButton label="拆分"><SplitRowsIcon /></YellowButton>
    </div>
    <div className="flex gap-0.5">
      <YellowButton label="升序"><SortIcon /></YellowButton>
      <YellowButton label="降序"><SortIcon desc /></YellowButton>
      <YellowButton label="过滤"><FilterIcon /></YellowButton>
      <YellowButton label="撤销过滤"><FilterUndoIcon /></YellowButton>
    </div>
    <YellowButton label="附件"><AttachIcon /></YellowButton>
    <button type="button" className={`${yellow} ml-24 h-[22px] w-[127px] pt-0.5`}>缺省值</button>
    <button type="button" className={`${yellow} h-[22px] w-[142px] pt-0.5`}>附加计划编制</button>
  </div>
);

const TabStrip = ({ active, onSelect }: { active: number; onSelect: (i: number) => void }) => (
  <div role="tablist" className="flex h-[18px] pl-[42px]">
    {tabs.map((name, i) => {
      const on = i === active;
      return (
        <button
          type="button"
          role="tab"
          aria-selected={on}
          key={name}
          onClick={() => onSelect(i)}
          className="relative -ml-1.5 flex h-[18px] shrink-0"
          style={{ zIndex: on ? 20 : 19 - i }}
        >
          <svg width="17" height="18" fill="none" aria-hidden="true">
            <defs>
              <linearGradient id={`cap${i}`} x1="0" y1="0" x2="0" y2="1">
                <stop offset="0" stopColor={on ? "#a5c2e2" : "#d3e2f0"} />
                <stop offset="1" stopColor={on ? "#86aad6" : "#b5cce4"} />
              </linearGradient>
            </defs>
            <path d="M0 18L14 2Q15 .5 17 .5V18Z" fill={`url(#cap${i})`} />
            <path d="M0 18L14 2Q15 .5 17 .5" stroke="#7c9cbc" />
          </svg>
          <span
            className={`h-[18px] border-t border-r border-[#7c9cbc] bg-linear-to-b pr-[17px] leading-5 ${on ? "from-[#a5c2e2] to-[#86aad6]" : "from-[#d3e2f0] to-[#b5cce4]"}`}
          >
            {name}
          </span>
        </button>
      );
    })}
  </div>
);

const AccountPanel = () => (
  <section className="mr-11 ml-6 flex flex-1 flex-col gap-0.5 border-x border-[#8fadc8] bg-[#dfebf5] pl-[7px]">
    <div className="-mr-px -ml-2 h-1 border-y border-[#6f93bb] bg-[#9fbfe2]" />
    <div className="mt-[18px] flex h-5">
      <div className="flex gap-0.5 pl-px">
        <YellowButton label="多重科目" size="h-5 w-[25px]"><GridIcon /></YellowButton>
        <YellowButton label="向导" size="h-5 w-[25px]"><WandIcon /></YellowButton>
        <YellowButton label="会话" size="h-5 w-[25px]"><SessionsIcon /></YellowButton>
      </div>
      <span className="w-6 shrink-0" />
      <Label htmlFor="cat" width="w-20">AccAssCat</Label>
      <Select id="cat" value="Q 项目 生成订单" width="w-[119px]" />
      <span className="w-2.5 shrink-0" />
      <Label htmlFor="dist" width="w-[103px]">分配</Label>
      <Select id="dist" value="单个科目设置" width="w-[183px]" muted />
      <span className="w-2.5 shrink-0" />
      <Label htmlFor="cocd" width="w-[55px]">CoCd</Label>
      <Select id="cocd" value="6896 李钢柱ET..." width="w-[111px]" muted />
    </div>
    <div className="flex h-5">
      <Label htmlFor="unload" width="w-32">卸货点</Label>
      <Field id="unload" width="w-[207px]" />
      <span className="w-2.5 shrink-0" />
      <Label htmlFor="recipient" width="w-[127px]">接收方</Label>
      <Field id="recipient" width="w-[103px]" />
    </div>
    <div className="flex h-5">
      <Label htmlFor="gl" width="w-32">总帐科目</Label>
      <span className="relative flex">
        <Field id="gl" value="1403010000" width="w-[87px]" readOnly useMono />
        <span className="absolute -top-0.5 -left-0.5 size-1.5 border-t border-l border-[#e02020]" />
        <span className="absolute -top-0.5 -right-0.5 size-1.5 border-t border-r border-[#e02020]" />
        <span className="absolute -bottom-0.5 -left-0.5 size-1.5 border-b border-l border-[#e02020]" />
        <span className="absolute -right-0.5 -bottom-0.5 size-1.5 border-r border-b border-[#e02020]" />
      </span>
      <button
        type="button"
        aria-label="搜索帮助"
        className="ml-px flex h-[19px] w-4 items-center justify-center border-r border-b border-[#9aa9bb] bg-linear-to-b from-[#e4eaf2] to-[#b5c7de]"
      >
        <svg width="12" height="12" fill="#fff" stroke="#333" aria-hidden="true">
          <path d="M3.500 .5H11.500V8.500H3.500Z" />
          <path d="M.5 3.500H8.500V11.500H.5Z" />
        </svg>
      </button>
    </div>
    <div className="flex h-5">
      <Label htmlFor="area" width="w-32">成本控制域</Label>
      <Field id="area" value="6888" width="w-[39px]" readOnly useMono />
    </div>
    <div className="flex h-5">
      <Label htmlFor="wbs" width="w-32">WBS 元素</Label>
      <Field id="wbs" value="C-100020-00-01" width="w-[199px]" useMono />
    </div>
    <div className="flex h-5 gap-px">
      <span className="flex">
        <Label htmlFor="order" width="w-32">销售订单</Label>
        <Field id="order" width="w-[87px]" readOnly />
      </span>
      <Field id="orderItem" label="销售订单项目" value="0" width="w-[55px]" readOnly useMono />
      <Field id="orderLine" label="计划行" value="0" width="w-[39px]" readOnly useMono />
    </div>
  </section>
);

export default function App() {
  const [active, setActive] = useState(6);

  return (
    <div className="relative flex min-h-screen flex-col overflow-hidden border-l-2 border-[#77797d] bg-[#f5f7fb] font-['Noto_Sans','Noto_Sans_CJK_SC',sans-serif] text-xs leading-4 text-black">
      <MenuBar />
      <StandardToolbar />
      <div className="mt-2 ml-[13px] flex flex-1 flex-col border-t border-l border-[#93a9c4] bg-[#e8f0f7]">
        <TitleBar />
        <AppToolbar />
        <div className="flex flex-1">
          <Overview />
          <div className="flex w-1 shrink-0 items-center bg-[#d9e4ec]">
            <span className="h-5 border-l-2 border-dotted border-[#a9b2ba]" />
          </div>
          <main className="flex min-w-0 flex-1 flex-col pt-2 pl-[3px]">
            <div className="flex h-[22px] items-start">
              <button
                type="button"
                aria-label="购物车"
                className="flex h-[21px] w-[31px] items-center justify-center border-2 border-[#333] bg-[#f2f2f2]"
              >
                <CartIcon />
              </button>
              <span className="w-px" />
              <Select id="type" label="订单类型" value="NB 标准采购订单" width="w-[167px]" />
              <span className="w-px" />
              <Field id="number" label="订单编号" width="w-[87px]" />
              <span className="w-[9px]" />
              <Label htmlFor="vendor" width="w-32">供应商</Label>
              <Field id="vendor" value="1000000000 李钢柱供应商1天翼集团" width="w-[223px]" />
              <span className="w-[9px]" />
              <Label htmlFor="date" width="w-[88px]">凭证日期</Label>
              <Field id="date" value="2022.04.20" width="w-[87px]" useMono />
            </div>
            <div className="flex">
              <div className="flex w-[22px] shrink-0 flex-col">
                <YellowButton label="展开标题"><ExpandIcon open /></YellowButton>
                <YellowButton label="收起项目概览"><ExpandIcon /></YellowButton>
              </div>
              <div className="min-w-0 flex-1">
                <h2 className="h-5 pt-1 pl-1">标题</h2>
                <TablePanel />
              </div>
            </div>
            <ItemToolbar />
            <div className="mt-[22px] flex h-[22px]">
              <YellowButton label="收起项目明细"><ExpandIcon /></YellowButton>
              <span className="w-0.5" />
              <Label htmlFor="item" width="w-28">项目</Label>
              <Select id="item" value="1 [ 10 ] 1100000058 , 白色原材料-键盘 R109李钢柱" width="w-[327px]" />
              <span className="w-[25px]" />
              <span className="flex gap-0.5">
                <YellowButton label="上一项"><Triangle dir="up" big /></YellowButton>
                <YellowButton label="下一项"><Triangle dir="down" big /></YellowButton>
              </span>
            </div>
            <div className="h-[3px]" />
            <TabStrip active={active} onSelect={setActive} />
            <AccountPanel />
          </main>
        </div>
      </div>
      <div className="absolute top-0 right-0 flex h-6 w-[27px] justify-end rounded-bl-sm border-b-2 border-l border-[#142a63] bg-linear-to-b from-[#4a6cc0] to-[#1f3c8c] shadow-md">
        <span className="flex h-4 w-2 items-end rounded-bl-sm border-b border-l border-[#12265c] pb-0.5 pl-0.5">
          <span className="h-0.5 w-full bg-[#9db8f5]" />
        </span>
      </div>
    </div>
  );
}
